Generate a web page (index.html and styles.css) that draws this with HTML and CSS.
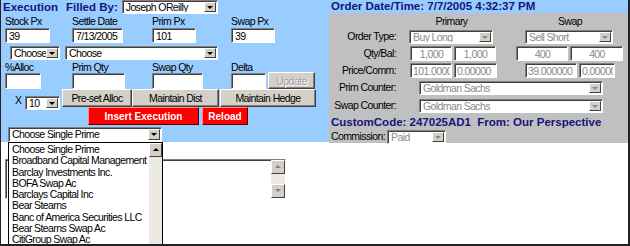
FILE: index.html
```html
<!DOCTYPE html>
<html lang="en">
<head>
    <meta charset="UTF-8">
    <meta name="viewport" content="width=device-width, initial-scale=1.0">
    <title>Execution</title>
    <link rel="stylesheet" href="styles.css">
</head>
<body>
<div class="screen">
    <div class="top">
        <div class="exec">
            <div class="title-row">
                <b class="title">Execution</b>
                <b class="title">Filled By:</b>
                <div class="combo trader"><span class="val">Joseph OReilly</span><span class="arr"></span></div>
            </div>
            <div class="cols labels"><span>Stock Px</span><span>Settle Date</span><span>Prim Px</span><span>Swap Px</span></div>
            <div class="cols fields">
                <span><input class="txt w45" value="39"></span>
                <span><input class="txt w51" value="7/13/2005"></span>
                <span><input class="txt w44" value="101"></span>
                <span><input class="txt w44" value="39"></span>
            </div>
            <div class="choose-row">
                <div class="combo w50"><span class="val">Choose</span><span class="arr"></span></div>
                <div class="combo w153"><span class="val">Choose</span><span class="arr"></span></div>
            </div>
            <div class="cols labels2"><span>%Alloc</span><span>Prim Qty</span><span>Swap Qty</span><span>Delta</span></div>
            <div class="cols fields2">
                <span><input class="txt w36"></span>
                <span><input class="txt w53"></span>
                <span><input class="txt w51"></span>
                <span class="delta"><input class="txt w35"><button class="btn update" disabled>Update</button></span>
            </div>
            <div class="action-row">
                <span class="times">X</span>
                <div class="combo w35 mult"><span class="val">10</span><span class="arr"></span></div>
                <button class="btn preset">Pre-set Alloc</button>
                <button class="btn dist">Maintain Dist</button>
                <button class="btn hedge">Maintain Hedge</button>
            </div>
            <div class="red-row">
                <button class="btn-red insert">Insert Execution</button>
                <button class="btn-red reload">Reload</button>
            </div>
            <div class="prime-row">
                <div class="combo w154"><span class="val">Choose Single Prime</span><span class="arr"></span></div>
            </div>
        </div>

        <div class="order">
            <div class="stamp">Order Date/Time: 7/7/2005 4:32:37 PM</div>
            <div class="detail">
                <span></span>
                <span class="head">Primary</span>
                <span class="head swap-head">Swap</span>

                <span class="lbl">Order Type:</span>
                <span class="cell"><div class="combo off w84 ml11"><span class="val">Buy Long</span><span class="arr"></span></div></span>
                <span class="cell"><div class="combo off w88 ml20"><span class="val">Sell Short</span><span class="arr"></span></div></span>

                <span class="lbl">Qty/Bal:</span>
                <span class="cell pair ml12"><input class="txt off mid w42" value="1,000"><input class="txt off mid w42" value="1,000"></span>
                <span class="cell pair ml11"><input class="txt off mid w52" value="400"><input class="txt off mid w53" value="400"></span>

                <span class="lbl">Price/Comm:</span>
                <span class="cell pair ml12"><input class="txt off w42" value="101.000000"><input class="txt off w43" value="0.00000"></span>
                <span class="cell pair ml20"><input class="txt off w52" value="39.000000"><input class="txt off w36" value="0.00000"></span>

                <span class="lbl">Prim Counter:</span>
                <span class="cell wide"><div class="combo off w184 ml21"><span class="val">Goldman Sachs</span><span class="arr"></span></div></span>

                <span class="lbl">Swap Counter:</span>
                <span class="cell wide"><div class="combo off w184 ml21"><span class="val">Goldman Sachs</span><span class="arr"></span></div></span>

                <span class="code">CustomCode: 247025AD1&nbsp; From: Our Perspective</span>

                <span class="commission">Commission: <div class="combo off w59"><span class="val">Paid</span><span class="arr"></span></div></span>
            </div>
        </div>
    </div>

    <div class="notes">
        <div class="sbar">
            <span class="sbtn"><i class="up"></i></span>
            <span class="strack"></span>
            <span class="sbtn"><i class="down"></i></span>
        </div>
    </div>

    <div class="droplist">
        <ul>
            <li>Choose Single Prime</li>
            <li>Broadband Capital Management</li>
            <li>Barclay Investments Inc.</li>
            <li>BOFA Swap Ac</li>
            <li>Barclays Capital Inc</li>
            <li>Bear Stearns</li>
            <li>Banc of America Securities LLC</li>
            <li>Bear Stearns Swap Ac</li>
            <li>CitiGroup Swap Ac</li>
        </ul>
        <div class="sbar">
            <span class="sbtn"><i class="up"></i></span>
            <span class="strack"></span>
        </div>
    </div>
</div>
</body>
</html>
```

FILE: styles.css
```css
* {
    margin: 0;
    padding: 0;
    box-sizing: border-box;
}
body {
    width: 630px;
    height: 246px;
    overflow: hidden;
    background-color: #fff;
    font-family: "Liberation Sans", Arial, sans-serif;
    font-size: 10.5px;
    letter-spacing: -0.6px;
    color: #000;
}
.screen {
    position: relative;
    height: 246px;
    border: solid #222;
    border-width: 0 2px 2px 1px;
    overflow: hidden;
}
.top {
    display: flex;
    align-items: flex-start;
}

/* left: execution form */
.exec {
    width: 328px;
    height: 142px;
    background-color: #99ccff;
}
.title-row {
    display: flex;
    align-items: center;
    height: 14px;
    padding-left: 2px;
}
.title {
    font-size: 11.5px;
    letter-spacing: 0;
    color: #14147a;
    margin-right: 8px;
}
.trader {
    width: 96px;
    height: 13px;
    margin-left: -4px;
}
.cols {
    display: grid;
    grid-template-columns: 67px 80px 79px auto;
    padding-left: 4px;
}
.labels {
    height: 13px;
    line-height: 15px;
}
.labels2 {
    height: 12px;
    line-height: 12px;
}
.fields {
    height: 17px;
    padding-top: 1px;
}
.fields2 {
    height: 16px;
}
.delta {
    display: flex;
    align-items: flex-start;
}
.choose-row {
    display: flex;
    gap: 5px;
    height: 17px;
    padding: 2px 0 0 9px;
}
.action-row {
    display: flex;
    align-items: flex-start;
    height: 18px;
    padding-left: 14px;
}
.times {
    width: 10px;
    line-height: 18px;
    padding-top: 2px;
}
.mult {
    height: 14px;
    margin-top: 7px;
    margin-right: 2px;
}
.red-row {
    display: flex;
    gap: 3px;
    height: 20px;
    padding-left: 87px;
}
.prime-row {
    padding-left: 7px;
}

/* form controls, windows classic look */
.txt {
    height: 15px;
    border: 1px solid;
    border-color: #808080 #fff #fff #808080;
    box-shadow: inset 1px 1px #404040;
    background-color: #fff;
    font: inherit;
    letter-spacing: inherit;
    padding: 1px 3px 0;
    color: #000;
    outline: none;
}
.fields2 .txt {
    height: 16px;
}
.txt.off {
    color: #8a8a8a;
    padding: 1px 1px 0 2px;
}
.txt.mid {
    text-align: center;
}
.combo {
    display: flex;
    height: 14px;
    border: 1px solid;
    border-color: #808080 #fff #fff #808080;
    box-shadow: inset 1px 1px #404040;
    background-color: #fff;
    padding: 1px;
    overflow: hidden;
}
.combo .val {
    flex: 1;
    padding-left: 2px;
    line-height: 11px;
    white-space: nowrap;
    overflow: hidden;
}
.combo .arr {
    position: relative;
    width: 12px;
    background-color: #d4d0c8;
    border: 1px solid;
    border-color: #fff #404040 #404040 #fff;
}
.combo .arr::after {
    content: "";
    position: absolute;
    left: 2px;
    top: 3px;
    border-left: 3px solid transparent;
    border-right: 3px solid transparent;
    border-top: 3px solid #000;
}
.combo.off .val {
    color: #8a8a8a;
}
.combo.off .arr::after {
    border-top-color: #8a8a8a;
}
.btn {
    height: 18px;
    background-color: #d4d0c8;
    border: 1px solid;
    border-color: #fff #404040 #404040 #fff;
    box-shadow: inset -1px -1px #808080;
    font: inherit;
    letter-spacing: inherit;
    color: #000;
}
.update {
    width: 47px;
    height: 17px;
    margin: -1px 0 0 2px;
    color: #a0a0a0;
    text-shadow: 1px 1px #fff;
}
.preset { width: 70px; }
.dist { width: 87px; }
.hedge { width: 96px; margin-left: 1px; }
.btn-red {
    height: 18px;
    background-color: #ff0000;
    border: 1px solid;
    border-color: #ff9090 #5a0000 #5a0000 #ff9090;
    color: #fff;
    font-family: "Liberation Sans", Arial, sans-serif;
    font-size: 10px;
    font-weight: bold;
    letter-spacing: 0;
}
.insert { width: 111px; }
.reload { width: 46px; }

.w35 { width: 35px; }
.w36 { width: 36px; }
.w42 { width: 42px; }
.w43 { width: 43px; }
.w44 { width: 44px; }
.w45 { width: 45px; }
.w50 { width: 50px; }
.w51 { width: 51px; }
.w52 { width: 52px; }
.w53 { width: 53px; }
.w59 { width: 59px; }
.w84 { width: 84px; }
.w88 { width: 88px; }
.w153 { width: 153px; }
.w154 { width: 154px; height: 15px; }
.w184 { width: 184px; }
.ml11 { margin-left: 11px; }
.ml12 { margin-left: 12px; }
.ml20 { margin-left: 20px; }
.ml21 { margin-left: 21px; }

/* right: order summary */
.order {
    width: 299px;
}
.stamp {
    height: 13px;
    line-height: 13px;
    padding-left: 2px;
    background-color: #99ccff;
    font-size: 11.5px;
    font-weight: bold;
    letter-spacing: 0;
    color: #14147a;
    white-space: nowrap;
}
.detail {
    display: grid;
    grid-template-columns: 69px 107px 121px;
    grid-template-rows: 15px 17px 17px 17px 18px 17px 15px 14px;
    height: 130px;
    background-color: #c0c0c0;
}
.head {
    text-align: center;
    line-height: 16px;
}
.swap-head {
    padding-left: 9px;
}
.lbl {
    text-align: right;
    line-height: 17px;
    padding-right: 2px;
    white-space: nowrap;
}
.cell {
    display: flex;
    align-items: center;
}
.pair {
    gap: 2px;
}
.wide {
    grid-column: span 2;
}
.code {
    grid-column: span 3;
    padding-left: 2px;
    line-height: 16px;
    font-size: 11.5px;
    font-weight: bold;
    letter-spacing: 0;
    color: #14147a;
    white-space: nowrap;
}
.commission {
    grid-column: span 3;
    display: flex;
    align-items: flex-start;
    gap: 2px;
    padding: 1px 0 0 2px;
    line-height: 13px;
}

/* lower frame: notes box behind the open list */
.notes {
    position: absolute;
    left: 4px;
    top: 159px;
    width: 281px;
    height: 40px;
    border: 1px solid;
    border-color: #808080 #fff #fff #808080;
    box-shadow: inset 1px 1px #404040;
    background-color: #fff;
}
.sbar {
    position: absolute;
    right: 0;
    top: 0;
    bottom: 0;
    width: 14px;
    display: flex;
    flex-direction: column;
}
.sbtn {
    position: relative;
    height: 14px;
    background-color: #d4d0c8;
    border: 1px solid;
    border-color: #fff #404040 #404040 #fff;
}
.strack {
    flex: 1;
    background-color: #ece9e3;
}
.sbtn i {
    position: absolute;
    left: 3px;
    top: 4px;
    border-left: 3px solid transparent;
    border-right: 3px solid transparent;
}
.sbtn .up {
    border-bottom: 3px solid #000;
}
.sbtn .down {
    border-top: 3px solid #000;
}
.notes .sbtn .up, .notes .sbtn .down {
    border-bottom-color: #808080;
    border-top-color: #808080;
}

/* open dropdown of the prime combo */
.droplist {
    position: absolute;
    left: 7px;
    top: 142px;
    width: 155px;
    height: 110px;
    border: 1px solid #000;
    background-color: #fff;
    overflow: hidden;
}
.droplist ul {
    list-style: none;
    width: 140px;
    padding: 1px 0 0 3px;
    overflow: hidden;
}
.droplist li {
    height: 11.25px;
    line-height: 11px;
    white-space: nowrap;
}
.droplist .sbar {
    width: 13px;
}
```
